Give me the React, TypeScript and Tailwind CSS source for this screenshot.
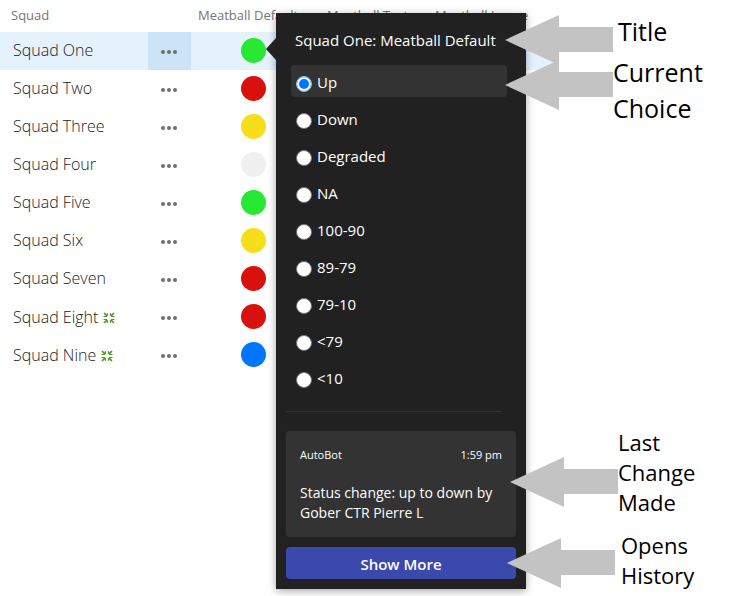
import { useState } from "react";

type Squad = { name: string; color: string; isNew?: boolean };

const squads: Squad[] = [
  { name: "Squad One", color: "bg-[#27e833]" },
  { name: "Squad Two", color: "bg-[#d9110e]" },
  { name: "Squad Three", color: "bg-[#f6de1b]" },
  { name: "Squad Four", color: "bg-[#f0f0f0]" },
  { name: "Squad Five", color: "bg-[#27e833]" },
  { name: "Squad Six", color: "bg-[#f6de1b]" },
  { name: "Squad Seven", color: "bg-[#d9110e]" },
  { name: "Squad Eight", color: "bg-[#d9110e]", isNew: true },
  { name: "Squad Nine", color: "bg-[#0075ff]", isNew: true },
];

const choices = ["Up", "Down", "Degraded", "NA", "100-90", "89-79", "79-10", "<79", "<10"];

function NewMark() {
  return (
    <svg viewBox="0 0 12 12" className="mb-px ml-[5px] inline-block size-3" role="img" aria-label="New">
      <g stroke="#4e9a2a" fill="none">
        <path d="M1 1L4.200 4.200M11 1L7.800 4.200M1 11L4.200 7.800M11 11L7.800 7.800" strokeWidth="1.7" />
        <path d="M4.300 1L4.700 4M7.700 1L7.300 4M4.300 11L4.700 8M7.700 11L7.300 8" strokeWidth="1" />
        <path d="M0.500 4.500H4M0.500 7.500H4M11.500 4.500H8M11.500 7.500H8" strokeWidth="1" />
      </g>
    </svg>
  );
}

function SquadTable() {
  return (
    <table className="w-[559px] table-fixed border-collapse text-left">
      <colgroup>
        <col className="w-[148px]" />
        <col className="w-[43px]" />
        <col className="w-[129px]" />
        <col className="w-[108px]" />
        <col />
      </colgroup>
      <thead>
        <tr className="h-8 text-[13px] leading-5 text-[#767676]">
          <th className="pb-[2px] pl-[11px] font-normal">Squad</th>
          <th aria-label="Actions" />
          <th className="pb-[2px] pl-[7px] font-normal">Meatball Default</th>
          <th className="pb-[2px] pl-[7px] font-normal">Meatball Test</th>
          <th className="pb-[2px] pl-[7px] font-normal">Meatball Image</th>
        </tr>
      </thead>
      <tbody>
        {squads.map((s, i) => (
          <tr key={s.name} className={i === 0 ? "h-[38px] bg-[#e5f1fb]" : "h-[38px]"}>
            <td
              className={
                s.isNew
                  ? "pl-[13px] text-base leading-5 font-light whitespace-nowrap text-[#222222]"
                  : "pb-[3px] pl-[13px] text-base leading-5 font-light whitespace-nowrap text-[#222222]"
              }
            >
              {s.name}
              {s.isNew && <NewMark />}
            </td>
            <td className={i === 0 ? "bg-[#cce4f7]" : ""}>
              <button
                type="button"
                aria-label={`Open menu for ${s.name}`}
                className="flex h-[38px] w-full items-center justify-center gap-[2px] pt-[2px] pr-[2px]"
              >
                <span className="size-1 rounded-full bg-[#6e6e6e]" />
                <span className="size-1 rounded-full bg-[#6e6e6e]" />
                <span className="size-1 rounded-full bg-[#6e6e6e]" />
              </button>
            </td>
            <td className="pb-[2px]">
              <span className={`ml-[50px] block size-[25px] rounded-full ${s.color}`} />
            </td>
            <td />
            <td />
          </tr>
        ))}
      </tbody>
    </table>
  );
}

function StatusPopover() {
  const [choice, setChoice] = useState("Up");
  return (
    <section
      aria-label="Squad status"
      className="absolute top-[13px] left-[276px] w-[250px] bg-[#212121] px-[10px] pb-[10px] text-[15px] text-white shadow-[0_2px_8px_rgba(0,0,0,0.35)]"
    >
      <svg viewBox="0 0 10 22" className="absolute top-[25px] -left-[10px] h-[22px] w-[10px]" aria-hidden="true">
        <path d="M10 0L0 11L10 22Z" fill="#212121" />
      </svg>
      <h2 className="pt-[15px] pl-[9px] leading-6 whitespace-nowrap">Squad One: Meatball Default</h2>
      <fieldset className="mt-[13px] mr-[9px] ml-[5px] flex flex-col gap-[5px]">
        {choices.map((c) => (
          <label
            key={c}
            className={
              c === choice
                ? "flex h-8 items-center gap-[5px] rounded bg-[#333333] pt-[2px] pl-[5px] leading-5"
                : "flex h-8 items-center gap-[5px] rounded pt-[2px] pl-[5px] leading-5"
            }
          >
            <input
              type="radio"
              name="status"
              checked={c === choice}
              onChange={() => setChoice(c)}
              className="mt-[4px] size-4 appearance-none rounded-full border border-[#767676] bg-white checked:border-[#8fc3ff] checked:bg-[#0075ff] checked:shadow-[inset_0_0_0_2px_#ffffff]"
            />
            {c}
          </label>
        ))}
      </fieldset>
      <hr className="mt-[18px] mr-[14px] border-[#333333]" />
      <article className="mt-[19px] rounded bg-[#333333] px-[14px] pt-[14px] pb-[14px]">
        <div className="flex justify-between text-[11px] leading-5">
          <span>AutoBot</span>
          <time>1:59 pm</time>
        </div>
        <p className="mt-[18px] text-sm leading-5">Status change: up to down by Gober CTR Pierre L</p>
      </article>
      <button type="button" className="mt-[10px] block h-8 w-full rounded bg-[#3a49ab] pt-[2px] font-semibold">
        Show More
      </button>
    </section>
  );
}

function Arrow() {
  return (
    <svg viewBox="0 0 108 50" className="h-[50px] w-[108px] shrink-0" aria-hidden="true">
      <path d="M0 25L54 0V12H108V37H54V50Z" fill="#c3c3c3" />
    </svg>
  );
}

export default function App() {
  return (
    <main className="relative min-h-screen overflow-hidden bg-white font-['Open_Sans','Noto_Sans',sans-serif]">
      <SquadTable />
      <StatusPopover />
      <div className="absolute top-[15px] left-[505px] flex gap-[5px] text-[25px] leading-8 text-black">
        <Arrow />
        <p>Title</p>
      </div>
      <div className="absolute top-[54px] left-[505px] flex text-[25px] leading-9 text-black">
        <div className="pt-[6px]">
          <Arrow />
        </div>
        <p>
          Current
          <br />
          Choice
        </p>
      </div>
      <div className="absolute top-[427px] left-[510px] flex text-[22px] leading-[30px] text-black">
        <div className="pt-[30px]">
          <Arrow />
        </div>
        <p>
          Last
          <br />
          Change
          <br />
          Made
        </p>
      </div>
      <div className="absolute top-[530px] left-[507px] flex gap-[6px] text-[22px] leading-[30px] text-black">
        <div className="pt-[8px]">
          <Arrow />
        </div>
        <p>
          Opens
          <br />
          History
        </p>
      </div>
    </main>
  );
}
